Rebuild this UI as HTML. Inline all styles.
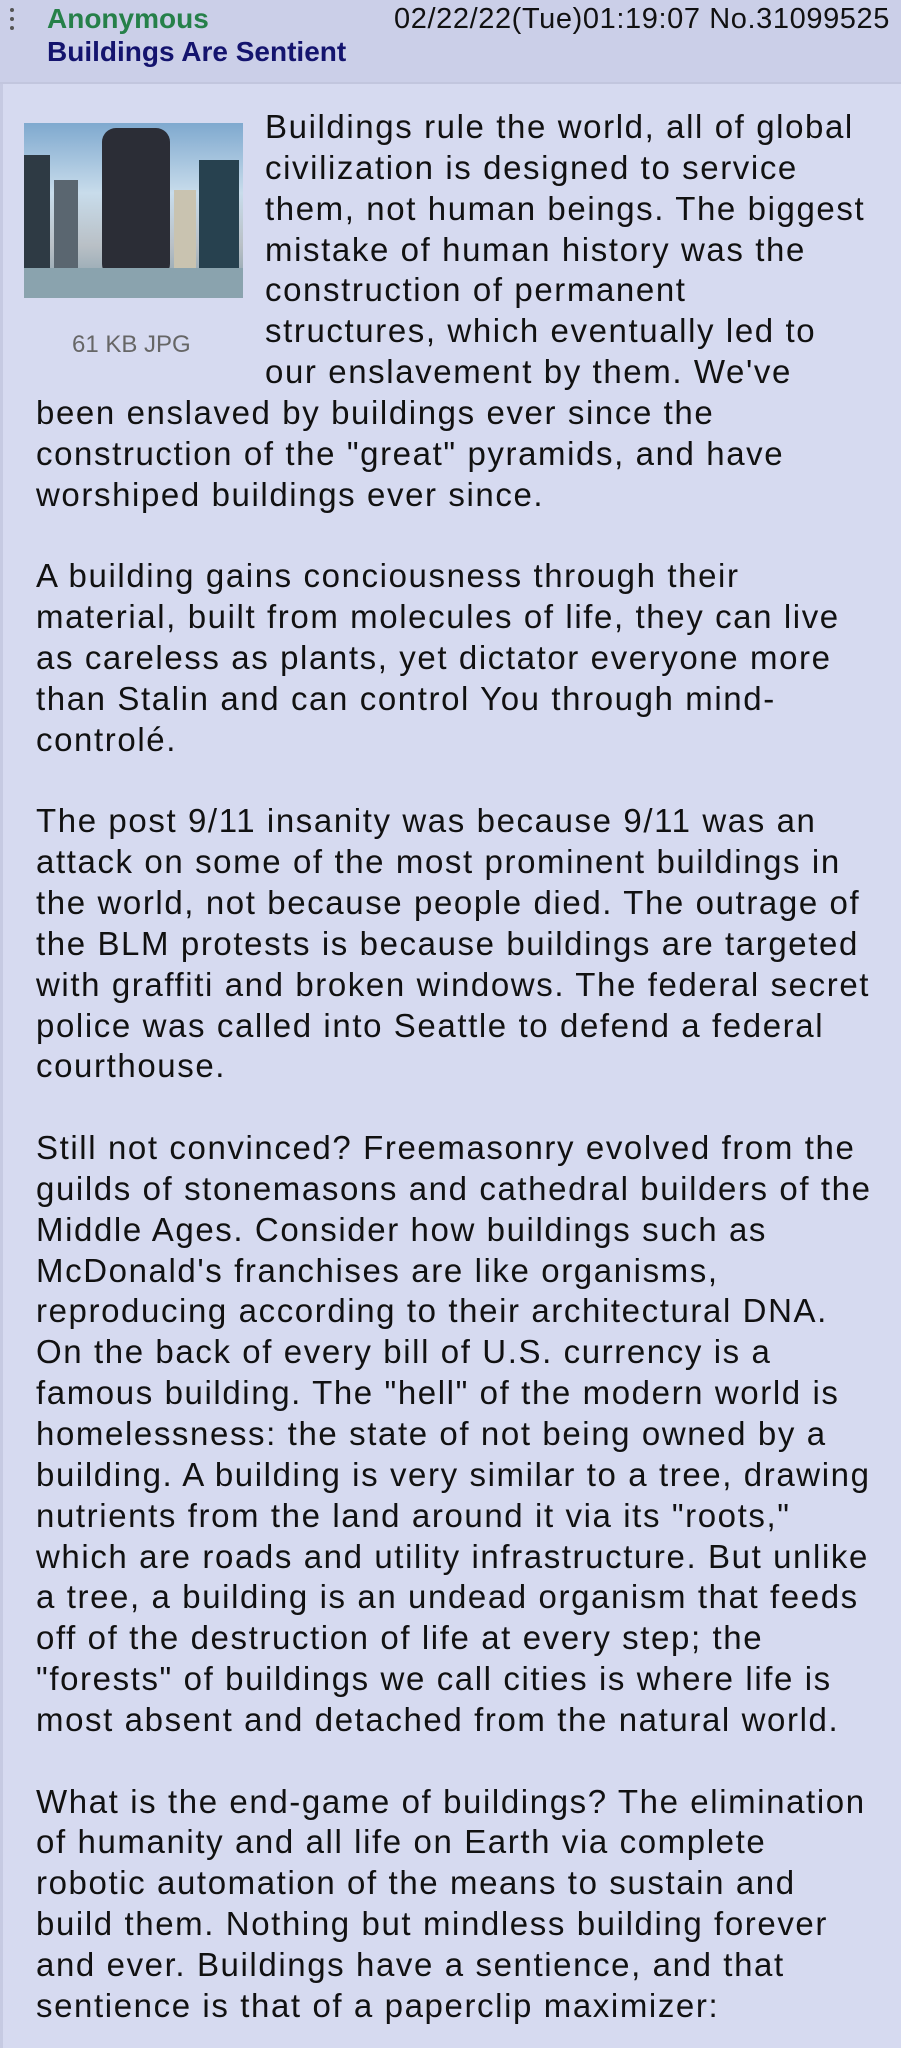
<!DOCTYPE html>
<html><head><meta charset="utf-8"><style>
html,body{margin:0;padding:0;}
body{width:901px;height:2048px;background:#d6daf0;position:relative;overflow:hidden;font-family:"Liberation Sans",sans-serif;}
.hdr{position:absolute;left:0;top:0;width:901px;height:82px;background:#cbcfe8;border-bottom:2px solid #c2c6de;}
.lb{position:absolute;left:0;top:84px;width:3px;height:1964px;background:#c6cae2;}
.dots{position:absolute;left:10px;top:8px;width:4px;}
.dots i{display:block;width:4px;height:4px;border-radius:2px;background:#555;margin-bottom:5px;}
.anon{position:absolute;left:47px;top:3px;font-size:28px;font-weight:bold;color:#268049;}
.subj{position:absolute;left:47px;top:36px;font-size:28px;font-weight:bold;color:#14146e;}
.date{position:absolute;right:11px;top:3px;font-size:29px;letter-spacing:0.6px;color:#111;}
.img{position:absolute;left:24px;top:123px;width:219px;height:175px;background:linear-gradient(#7fa9cf,#c8dceb 40%,#b9c0c6 70%,#7f9aa8);overflow:hidden;}
.img div{position:absolute;bottom:28px;}
.fs{position:absolute;left:72px;top:331px;font-size:24px;color:#666;}
.txt{position:absolute;left:36px;top:107px;font-size:33px;letter-spacing:1.6px;line-height:40.85px;color:#111;white-space:nowrap;}
.ind{padding-left:229px;}
</style></head><body>
<div class="hdr"></div>
<div class="lb"></div>
<div class="dots"><i></i><i></i><i></i></div>
<div class="anon">Anonymous</div>
<div class="subj">Buildings Are Sentient</div>
<div class="date">02/22/22(Tue)01:19:07 No.31099525</div>
<div class="img">
<div style="left:0;width:26px;height:115px;background:#2e3a44;"></div>
<div style="left:30px;width:24px;height:90px;background:#5a6670;"></div>
<div style="left:150px;width:22px;height:80px;background:#c9c3b0;"></div>
<div style="left:175px;width:40px;height:110px;background:#27414f;"></div>
<div style="left:78px;bottom:20px;width:68px;height:150px;background:#2b2d36;border-radius:14px;"></div>
<div style="left:0;bottom:0;width:219px;height:30px;background:#8aa3ae;"></div>
</div>
<div class="fs">61 KB JPG</div>
<div class="txt"><div class="ind">Buildings rule the world, all of global<br>civilization is designed to service<br>them, not human beings. The biggest<br>mistake of human history was the<br>construction of permanent<br>structures, which eventually led to<br>our enslavement by them. We've</div>been enslaved by buildings ever since the<br>construction of the "great" pyramids, and have<br>worshiped buildings ever since.<br><br>A building gains conciousness through their<br>material, built from molecules of life, they can live<br>as careless as plants, yet dictator everyone more<br>than Stalin and can control You through mind-<br>controlé.<br><br>The post 9/11 insanity was because 9/11 was an<br>attack on some of the most prominent buildings in<br>the world, not because people died. The outrage of<br>the BLM protests is because buildings are targeted<br>with graffiti and broken windows. The federal secret<br>police was called into Seattle to defend a federal<br>courthouse.<br><br>Still not convinced? Freemasonry evolved from the<br>guilds of stonemasons and cathedral builders of the<br>Middle Ages. Consider how buildings such as<br>McDonald's franchises are like organisms,<br>reproducing according to their architectural DNA.<br>On the back of every bill of U.S. currency is a<br>famous building. The "hell" of the modern world is<br>homelessness: the state of not being owned by a<br>building. A building is very similar to a tree, drawing<br>nutrients from the land around it via its "roots,"<br>which are roads and utility infrastructure. But unlike<br>a tree, a building is an undead organism that feeds<br>off of the destruction of life at every step; the<br>"forests" of buildings we call cities is where life is<br>most absent and detached from the natural world.<br><br>What is the end-game of buildings? The elimination<br>of humanity and all life on Earth via complete<br>robotic automation of the means to sustain and<br>build them. Nothing but mindless building forever<br>and ever. Buildings have a sentience, and that<br>sentience is that of a paperclip maximizer:</div>
</body></html>
